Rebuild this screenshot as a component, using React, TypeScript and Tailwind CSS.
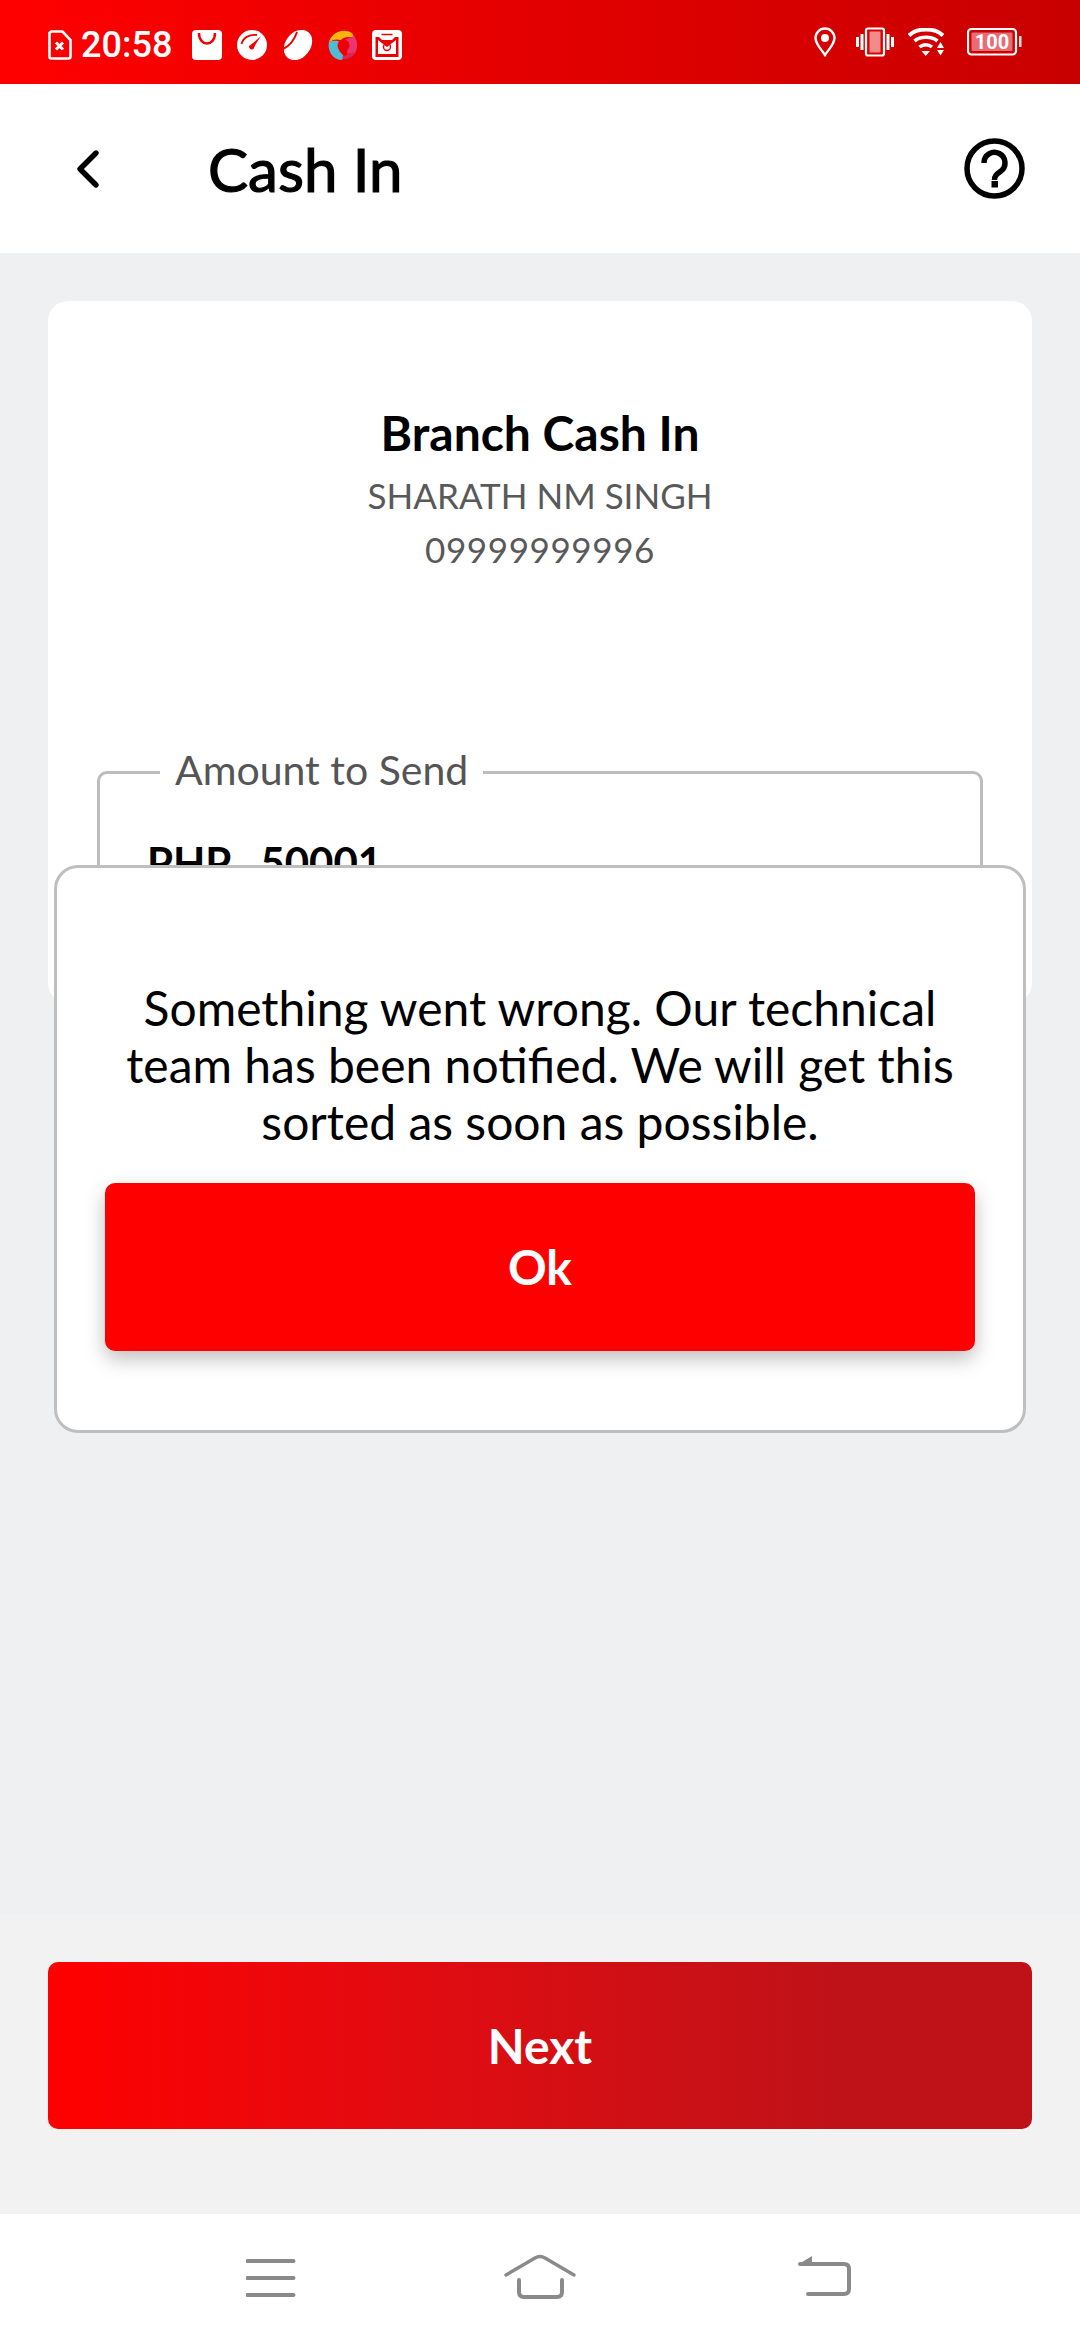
import { ChevronLeft } from "lucide-react";

function StatusLeftIcons() {
  return (
    <div className="flex items-center">
      <svg width="24" height="30" viewBox="0 0 24 30">
        <path d="M3 1.500h11.500L22.500 10v16.500a2 2 0 0 1-2 2H3.500a2 2 0 0 1-2-2V3z" fill="none" stroke="#fff" strokeWidth="2.600" />
        <path d="M8 12.500l7 7m0-7l-7 7" stroke="#fff" strokeWidth="3" />
      </svg>
      <span className="ml-[9px] w-[90px] font-['Roboto',sans-serif] text-[36px] font-medium leading-none text-white">20:58</span>
      <svg width="30" height="30" viewBox="0 0 30 30" className="ml-[21px]">
        <rect width="30" height="30" rx="4" fill="#fff" />
        <path d="M7 3c0 14 16 14 16 0" fill="none" stroke="#f40000" strokeWidth="2.400" />
      </svg>
      <svg width="30" height="30" viewBox="0 0 30 30" className="ml-[15px]">
        <circle cx="15" cy="15" r="15" fill="#fff" />
        <path d="M4.500 14C6 8 12 4 20 5" fill="none" stroke="#f30000" strokeWidth="1.800" />
        <path d="M24 6l-8 7-4 3a3 3 0 0 0 4.500 3l2-4.500z" fill="#f30000" />
      </svg>
      <svg width="30" height="30" viewBox="0 0 30 30" className="ml-[16px]">
        <ellipse cx="15" cy="15" rx="12.500" ry="16.500" transform="rotate(38 15 15)" fill="#fff" />
        <path d="M14 2C12 8 9 15 0 19" fill="none" stroke="#f20000" strokeWidth="2" />
      </svg>
      <svg width="30" height="30" viewBox="0 0 30 30" className="ml-[15px]">
        <path d="M1 13C2 4 14-3 24 3l3 5c-6-2-12-1-14 2-4-1-9-1-12 3z" fill="#ffb30f" />
        <path d="M26 6c5 7 3 14 1 17l-8 1c1-5 0-10-4-13 3-2 8-4 11-5z" fill="#ec3570" />
        <path d="M28 22c-4 7-12 8-17 7l3-4c1 1 3 1 5 0 2-1 5-3 9-3z" fill="#d92a56" />
        <path d="M1 12c3-1 8-2 11 0-2 3-2 7 0 10 2 2 3 3 3 3l-1 5C5 30-1 21 1 12z" fill="#4fbcd4" />
        <circle cx="15.500" cy="15.500" r="6" fill="#f00000" />
      </svg>
      <svg width="30" height="30" viewBox="0 0 30 30" className="ml-[14px]">
        <rect width="30" height="30" rx="4" fill="#fff" />
        <path d="M3.500 7h23v20h-23z" fill="#ee0000" />
        <path d="M7 7h16l-3 3H10z" fill="#fff" />
        <path d="M6 10l9 7 9-7v14H6z" fill="#fff" />
        <path d="M9.500 4.500h11" stroke="#ee0000" strokeWidth="1.500" />
        <circle cx="15" cy="17" r="3.500" fill="none" stroke="#ee0000" strokeWidth="1.400" />
      </svg>
    </div>
  );
}

function StatusRightIcons() {
  return (
    <div className="flex items-center">
      <svg width="22" height="30" viewBox="0 0 22 30">
        <path d="M11 28C7 22 1.500 17 1.500 11a9.500 9.500 0 0 1 19 0c0 6-5.500 11-9.500 17z" fill="none" stroke="#fff" strokeWidth="2.400" />
        <circle cx="11" cy="11" r="4" fill="#fff" />
      </svg>
      <svg width="38" height="30" viewBox="0 0 38 30" className="ml-[20px]">
        <rect x="0" y="10" width="3" height="10" fill="#fff" />
        <rect x="4.500" y="7" width="3" height="16" fill="#fff" />
        <rect x="10" y="1.500" width="18" height="27" rx="2" fill="#d90000" stroke="#fff" strokeWidth="2.200" />
        <rect x="13.500" y="4.500" width="11" height="21" fill="#f28a8a" />
        <rect x="30.500" y="7" width="3" height="16" fill="#fff" />
        <rect x="35" y="10" width="3" height="10" fill="#fff" />
      </svg>
      <svg width="36" height="28" viewBox="0 0 36 28" className="ml-[14px]">
        <path d="M1 7.500C9-0.500 27-0.500 35 7.500" fill="none" stroke="#fff" strokeWidth="4" />
        <path d="M6.500 13c6-5 17-5 23 0" fill="none" stroke="#fff" strokeWidth="3.600" />
        <path d="M11.500 19c3.500-3 9-3 12.500 0" fill="none" stroke="#fff" strokeWidth="3.600" />
        <path d="M13.500 23h8.500l-4.300 5z" fill="#fff" />
        <path d="M32.500 14l3.500 6h-7zM29 22h7l-3.500 5.500z" fill="#fff" />
      </svg>
      <svg width="55" height="28" viewBox="0 0 55 28" className="ml-[23px]">
        <rect x="1" y="1" width="48" height="25.500" rx="3.500" fill="none" stroke="#fff" strokeWidth="2.200" />
        <rect x="4.500" y="4.500" width="41" height="18.500" rx="1" fill="#e96b74" />
        <rect x="52" y="8" width="2.500" height="11" fill="#fff" opacity="0.850" />
        <text x="25" y="20.500" textAnchor="middle" fontSize="20" fontWeight="700" fill="#fff" fontFamily="Roboto, sans-serif">100</text>
      </svg>
    </div>
  );
}

function NavIcons() {
  return (
    <div className="flex h-[126px] items-center bg-white pl-[246px]">
      <svg width="50" height="50" viewBox="0 0 50 50" className="mb-[2px]">
        <path d="M1.500 10h46M1.500 27h46M1.500 44h46" stroke="#8a8a8a" strokeWidth="4" strokeLinecap="round" fill="none" />
      </svg>
      <svg width="72" height="50" viewBox="0 0 72 50" className="ml-[208px] mb-[2px]">
        <path d="M2 24L31 7q5-3 10 0L70 24" stroke="#8a8a8a" strokeWidth="3.400" strokeLinecap="round" fill="none" />
        <path d="M15 29v12q0 5 5 5h33q5 0 5-5V29" stroke="#8a8a8a" strokeWidth="4" strokeLinecap="round" fill="none" />
      </svg>
      <svg width="54" height="50" viewBox="0 0 54 50" className="ml-[222px] mb-[2px]">
        <path d="M14 5v8H1z" fill="#8a8a8a" />
        <path d="M2 13h44q5 0 5 5v20q0 5-5 5H10" stroke="#8a8a8a" strokeWidth="4" strokeLinecap="round" fill="none" />
      </svg>
    </div>
  );
}

export default function App() {
  return (
    <div className="relative flex h-[2340px] w-[1080px] flex-col overflow-hidden bg-[#eff0f2] font-['Lato',sans-serif]">
      <div className="flex h-[84px] items-start justify-between bg-gradient-to-r from-[#ff0000] to-[#c80000] pl-[48px] pr-[58px] pt-[27px]">
        <StatusLeftIcons />
        <StatusRightIcons />
      </div>

      <header className="flex h-[169px] items-center bg-white pl-[56px] pr-[55px]">
        <ChevronLeft size={64} strokeWidth={2} className="text-black" />
        <h1 className="ml-[88px] text-[60px] leading-none text-black [-webkit-text-stroke:1.2px_black]">Cash In</h1>
        <svg width="61" height="61" viewBox="0 0 61 61" className="ml-auto">
          <circle cx="30.500" cy="30.500" r="27.500" fill="none" stroke="#000" strokeWidth="5.500" />
          <path d="M20 25a10.500 10.500 0 1 1 16.500 8.500c-4 3-6 4-6 8.500" fill="none" stroke="#000" strokeWidth="5.500" />
          <rect x="27.500" y="43" width="6.500" height="6.500" fill="#000" />
        </svg>
      </header>

      <main className="flex-1 px-[48px] pt-[48px]">
        <div className="h-[702px] overflow-hidden rounded-[20px] bg-white pt-[103px]">
          <h2 className="text-center text-[48px] font-bold leading-[58px] text-black">Branch Cash In</h2>
          <p className="mt-[6px] text-center text-[35px] leading-[54px] text-[#595959]">SHARATH NM SINGH</p>
          <p className="text-center text-[35px] leading-[54px] tracking-[0.6px] text-[#595959]">09999999996</p>
          <div className="relative mx-[49px] mt-[195px] h-[300px] rounded-[10px] border-[3px] border-[#bdbdbd] pl-[47px] pt-[62px]">
            <span className="absolute -top-[30px] left-[60px] bg-white px-[15px] text-[41px] leading-[52px] text-[#555555]">Amount to Send</span>
            <p className="text-[42px] font-bold leading-[52px] text-black">
              PHP <span className="ml-[20px]">50001</span>
            </p>
          </div>
        </div>
      </main>

      <div className="h-[299px] bg-[#f2f2f2] px-[48px] pt-[47px]">
        <button className="flex h-[167px] w-full items-center justify-center rounded-[10px] bg-gradient-to-r from-[#ff0000] to-[#bf1218] to-80% text-[48px] font-bold text-white">
          Next
        </button>
      </div>

      <NavIcons />

      <div className="absolute left-[54px] top-[865px] h-[568px] w-[972px] rounded-[24px] border-[3px] border-[#bfbfbf] bg-white px-[48px] pt-[111px]">
        <p className="text-center text-[48px] leading-[57px] text-black">
          Something went wrong. Our technical team has been notified. We will get this sorted as soon as possible.
        </p>
        <button className="mt-[33px] flex h-[168px] w-full items-center justify-center rounded-[10px] bg-[#ff0000] text-[48px] font-bold text-white shadow-[0_8px_20px_rgba(0,0,0,0.25)]">
          Ok
        </button>
      </div>
    </div>
  );
}
